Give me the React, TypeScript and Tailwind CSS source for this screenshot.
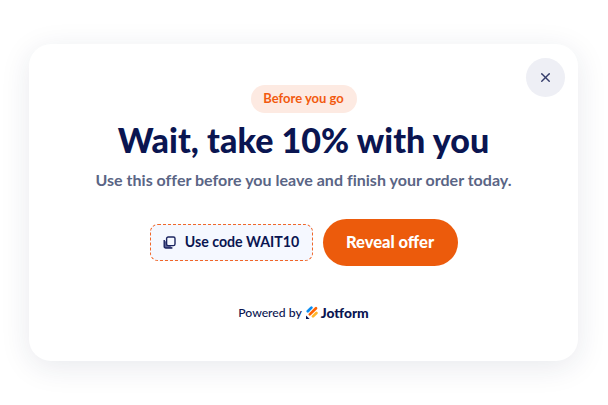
import React from 'react';
import { X } from 'lucide-react';

const fontStack = "font-['Lato','Liberation_Sans',sans-serif]";

const JotformMark = () => (
  <svg width="13" height="14" viewBox="0 0 13 14" fill="none" strokeLinecap="round" strokeWidth="2.7">
    <path d="M6.4 1.6 2.8 5.2" stroke="#0a8cf0" />
    <path d="M11 2.2 4.8 8.4" stroke="#ff6100" />
    <path d="M11.4 7 8 10.4" stroke="#ffb629" />
    <path d="M1 9.4v3.6h3.6z" fill="#0a1551" stroke="none" />
  </svg>
);

const CopyIcon = () => (
  <svg width="13" height="13" viewBox="0 0 13 13" fill="none" stroke="#1c2560" strokeWidth="1.4">
    <path d="M1.2 4v6.4a1.6 1.6 0 0 0 1.6 1.6H9.4" fill="#5c6396" />
    <rect x="3.6" y="1" width="8.4" height="8.6" rx="1.6" fill="#f5f8ff" />
  </svg>
);

export default function App() {
  return (
    <div className={`flex h-[405px] w-[608px] items-start overflow-hidden bg-white pl-[29px] pt-[44px] ${fontStack}`}>
      <div className="relative flex h-[317px] w-[549px] flex-col items-center rounded-[22px] bg-white pt-[41px] shadow-[0_6px_30px_rgba(30,40,80,0.10)]">
        <button className="absolute right-[13px] top-[14px] flex h-[39px] w-[39px] items-center justify-center rounded-full bg-[#eeeff5] text-[#343c6a]">
          <X size={15} strokeWidth={2.2} />
        </button>
        <div className="flex h-[28px] w-[106px] items-center justify-center rounded-full bg-[#fdeae2] text-[13px] font-bold text-[#f25a0f]">
          Before you go
        </div>
        <h1 className="mt-[5px] text-[34px] font-black leading-[44px] tracking-[0.05px] text-[#0a1551]">
          Wait, take 10% with you
        </h1>
        <p className="mt-[6px] text-[16px] font-bold leading-[24px] tracking-[0.02px] text-[#5a6585]">
          Use this offer before you leave and finish your order today.
        </p>
        <div className="mt-[27px] flex items-center gap-[10px]">
          <button className="mb-[1px] flex h-[37px] w-[163px] items-center justify-center gap-[9px] rounded-[8px] border-[1.5px] border-dashed border-[#f0672a] bg-[#f5f8ff] text-[14.2px] font-bold text-[#0a1551]">
            <CopyIcon />
            Use code WAIT10
          </button>
          <button className="flex h-[47px] w-[135px] items-center justify-center rounded-full bg-[#ec5b0c] text-[16.5px] font-black text-white">
            Reveal offer
          </button>
        </div>
        <div className="mt-[38px] flex h-[18px] items-center gap-[3px] text-[12.2px] font-medium text-[#0a1551]">
          <span>Powered by</span>
          <JotformMark />
          <span className="text-[13.8px] font-black">Jotform</span>
        </div>
      </div>
    </div>
  );
}
